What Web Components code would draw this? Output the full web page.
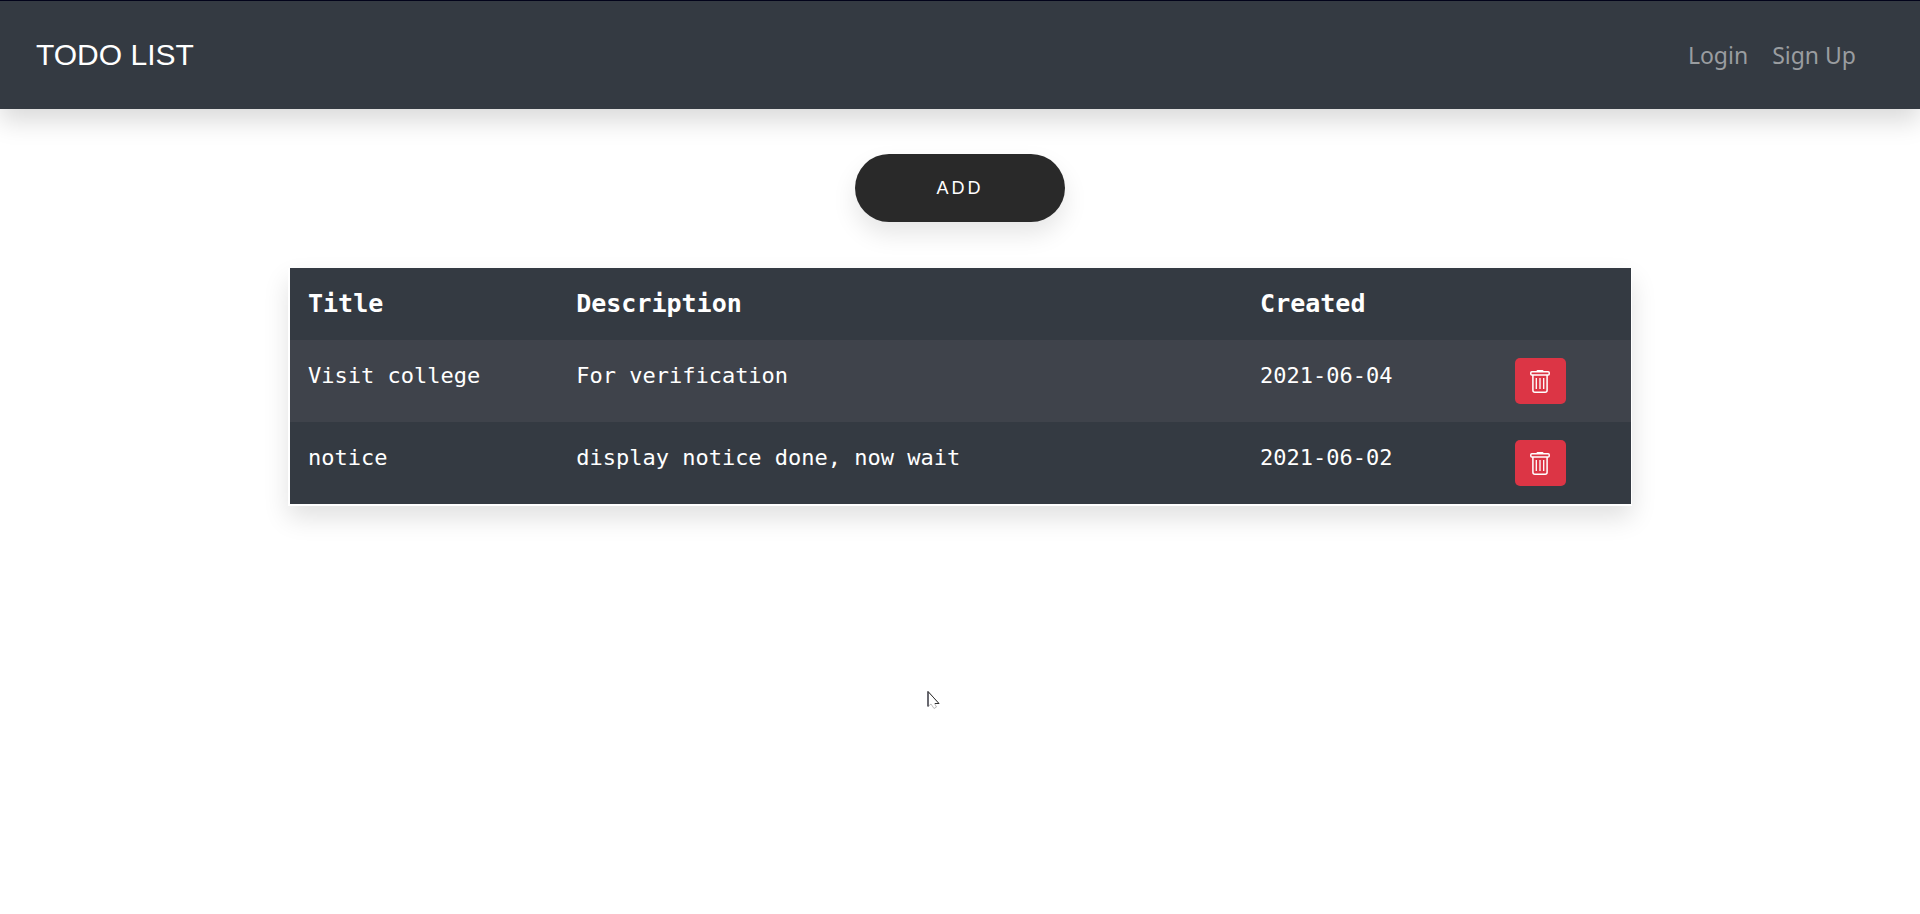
<!DOCTYPE html>
<html lang="en">
<head>
<meta charset="utf-8">
<meta name="viewport" content="width=device-width, initial-scale=1">
<title>Todo List</title>
<style>
  body { margin: 0; background: #fff; font-family: "Liberation Sans", Arial, sans-serif; }
</style>
</head>
<body>
<todo-app></todo-app>
<script>
function define(name, html, setup) {
  const template = document.createElement('template');
  template.innerHTML = html;
  customElements.define(name, class extends HTMLElement {
    constructor() {
      super();
      this.attachShadow({ mode: 'open' }).append(template.content.cloneNode(true));
    }
    connectedCallback() { if (setup) setup(this, this.shadowRoot); }
  });
}

define('nav-link', `
  <style>
    :host { display: block; }
    a { color: #9a9da0; text-decoration: none; font: 23px/30px "Noto Sans", sans-serif; }
    a:hover { color: #c8cacc; }
  </style>
  <a href="#"><slot></slot></a>`);

define('nav-bar', `
  <style>
    :host { display: block; }
    header {
      display: flex; align-items: center; justify-content: space-between;
      box-sizing: border-box; min-height: 109px; padding: 4px 64px 4px 36px;
      background: #343a42; border-top: 1px solid #02031a;
      box-shadow: 0 12px 24px rgba(0, 0, 0, .15);
    }
    .brand { color: #fff; text-decoration: none; font-size: 30px; line-height: 36px; }
    nav { display: flex; gap: 24px; }
  </style>
  <header>
    <a class="brand" href="#"><slot name="brand"></slot></a>
    <nav><slot></slot></nav>
  </header>`);

define('add-button', `
  <style>
    :host { display: block; }
    button {
      display: block; width: 210px; height: 68px; padding: 0;
      border: 0; border-radius: 34px; background: #292929; color: #fff;
      font: 18px/24px "Liberation Sans", Arial, sans-serif; letter-spacing: 3px;
      box-shadow: 0 12px 24px rgba(0, 0, 0, .1); cursor: pointer;
    }
  </style>
  <button type="button"><slot></slot></button>`);

define('delete-button', `
  <style>
    :host { display: block; }
    button {
      display: flex; align-items: center; justify-content: center;
      width: 51px; height: 46px; padding: 0; border: 0; border-radius: 5px;
      background: #dc3545; color: #fff; cursor: pointer;
    }
  </style>
  <button type="button" aria-label="Delete">
    <svg width="20" height="23" viewBox="0 0 20 23" fill="none" stroke="currentColor" aria-hidden="true">
      <rect x="6.5" y="0" width="7" height="2" rx="1" fill="currentColor" stroke="none"/>
      <rect x=".8" y="1.8" width="18.4" height="3.2" rx="1" stroke-width="1.5"/>
      <path d="M2.9 5v15.2a2 2 0 0 0 2 2h10.2a2 2 0 0 0 2-2V5" stroke-width="1.5"/>
      <path d="M6.3 8v11M10 8v11M13.7 8v11" stroke-width="1.3"/>
    </svg>
  </button>`);

define('todo-table', `
  <style>
    :host {
      display: block; box-sizing: border-box; width: 70%; padding: 0 1px 2px 2px;
      box-shadow: 0 12px 24px rgba(0, 0, 0, .12);
    }
    table {
      width: 100%; table-layout: fixed; border-collapse: collapse;
      background: #343a42; color: #fff;
      font: 22px/36px "DejaVu Sans Mono", monospace;
    }
    th, td { box-sizing: border-box; padding: 18px; text-align: left; vertical-align: top; }
    th { height: 72px; font-size: 25px; }
    td { height: 82px; }
    tbody tr:nth-child(odd) { background: #3f434b; }
    .title { width: 20%; }
    .description { width: 51%; }
    .created { width: 19%; }
  </style>
  <table>
    <colgroup><col class="title"><col class="description"><col class="created"><col></colgroup>
    <thead><tr><th scope="col">Title</th><th scope="col">Description</th><th scope="col">Created</th><td></td></tr></thead>
    <tbody></tbody>
  </table>
  <style>thead td { height: 72px; }</style>`, (host, root) => {
  const body = root.querySelector('tbody');
  body.replaceChildren(...host.items.map((item) => {
    const row = document.createElement('tr');
    for (const text of item) {
      const cell = document.createElement('td');
      cell.textContent = text;
      row.append(cell);
    }
    const actions = document.createElement('td');
    actions.append(document.createElement('delete-button'));
    row.append(actions);
    return row;
  }));
});

Object.defineProperty(customElements.get('todo-table').prototype, 'items', {
  value: [
    ['Visit college', 'For verification', '2021-06-04'],
    ['notice', 'display notice done, now wait', '2021-06-02']
  ],
  writable: true
});

define('mouse-pointer', `
  <style>
    :host { display: block; position: absolute; left: 48.3%; top: 75.6vh; pointer-events: none; }
    svg { display: block; }
  </style>
  <svg width="14" height="18" viewBox="0 0 14 18" aria-hidden="true">
    <path d="M1 .5V15.5L4 13l3 4.5 2.500-1.500L7.500 12.500H12Z" fill="#fff" stroke="#aaa" stroke-width=".8"/>
    <path d="M1 .5V15.500" stroke="#1c1c28" stroke-width="1.2"/>
    <path d="M1 .5 12 12.500H8" fill="none" stroke="#333" stroke-width="1"/>
  </svg>`);

define('todo-app', `
  <style>
    :host { display: block; position: relative; min-height: 100vh; }
    main { display: flex; flex-direction: column; align-items: center; gap: 46px; padding: 45px 0; }
  </style>
  <nav-bar>
    <span slot="brand">TODO LIST</span>
    <nav-link>Login</nav-link>
    <nav-link>Sign Up</nav-link>
  </nav-bar>
  <main>
    <add-button>ADD</add-button>
    <todo-table></todo-table>
  </main>
  <mouse-pointer></mouse-pointer>`);
</script>
</body>
</html>
